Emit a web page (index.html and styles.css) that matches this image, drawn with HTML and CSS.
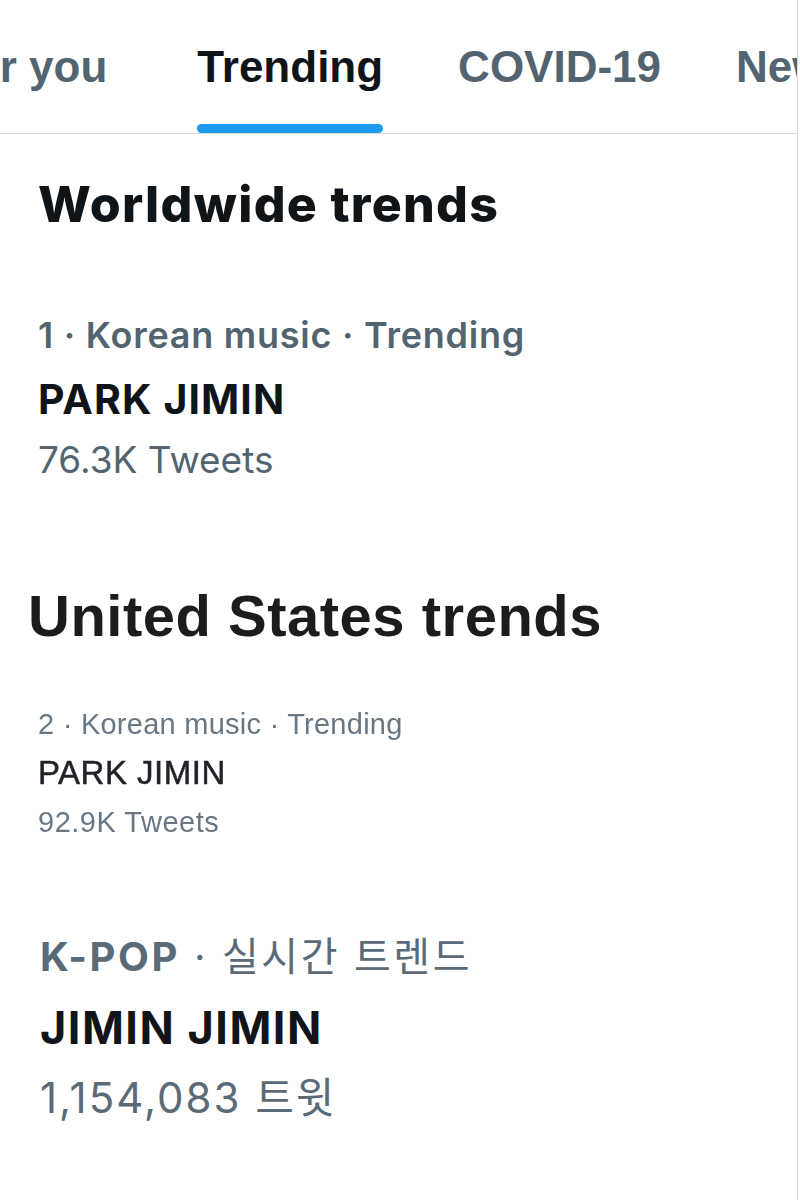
FILE: index.html
```html
<!DOCTYPE html>
<html lang="en">
<head>
<meta charset="utf-8">
<title>Trends</title>
<link rel="stylesheet" href="styles.css">
</head>
<body>
<div class="page">
  <nav class="tabs">
    <div class="tab tab-first"><span class="tab-label">For you</span></div>
    <div class="tab tab-active"><span class="tab-label">Trending</span><span class="tab-indicator"></span></div>
    <div class="tab"><span class="tab-label">COVID-19</span></div>
    <div class="tab"><span class="tab-label">News</span></div>
  </nav>

  <section class="ww">
    <h2 class="ww-heading">Worldwide trends</h2>
    <div class="ww-meta">1 · Korean music · Trending</div>
    <div class="ww-title">PARK JIMIN</div>
    <div class="ww-count">76.3K Tweets</div>
  </section>

  <section class="us">
    <h2 class="us-heading">United States trends</h2>
    <div class="us-meta">2 · Korean music · Trending</div>
    <div class="us-title">PARK JIMIN</div>
    <div class="us-count">92.9K Tweets</div>
  </section>

  <section class="kr">
    <div class="kr-meta"><b class="kr-cat">K-POP</b> · 실시간 트렌드</div>
    <div class="kr-title">JIMIN JIMIN</div>
    <div class="kr-count">1,154,083 트윗</div>
  </section>
</div>
</body>
</html>
```

FILE: styles.css
```css
html, body {
  margin: 0;
  padding: 0;
  background: #ffffff;
}

.page {
  width: 797px;
  height: 1200px;
  border-right: 1px solid #d6d9dc;
  overflow: hidden;
  font-family: "Liberation Sans", Arial, sans-serif;
}

/* Tabs */
.tabs {
  display: flex;
  gap: 75px;
  height: 133px;
  border-bottom: 1px solid #d3dadf;
  white-space: nowrap;
}

.tab {
  display: flex;
  flex-direction: column;
  padding-top: 45px;
  flex: none;
}

.tab-first {
  margin-left: -54px;
  margin-right: 15px;
}

.tab-label {
  font-family: "Liberation Sans", Arial, sans-serif;
  font-weight: 700;
  font-size: 44px;
  line-height: 44px;
  color: #536471;
}

.tab-active .tab-label {
  color: #0f1419;
}

.tab-indicator {
  display: block;
  height: 9px;
  margin-top: 35px;
  border-radius: 5px;
  background: #1d9bf0;
}

/* Worldwide */
.ww {
  padding-left: 38px;
  font-family: "Inter", "Liberation Sans", sans-serif;
}

.ww-heading {
  margin: 40px 0 0;
  font-size: 50px;
  line-height: 60px;
  font-weight: 800;
  letter-spacing: 1.3px;
  color: #0f1419;
}

.ww-meta {
  margin-top: 79px;
  font-size: 36px;
  line-height: 44px;
  font-weight: 600;
  letter-spacing: 0.75px;
  color: #536471;
}

.ww-title {
  margin-top: 17px;
  font-size: 41px;
  line-height: 50px;
  font-weight: 700;
  letter-spacing: 1.1px;
  color: #0f1419;
}

.ww-count {
  margin-top: 14px;
  font-size: 37px;
  line-height: 44px;
  font-weight: 400;
  color: #536471;
}

/* United States */
.us {
  padding-left: 38px;
  font-family: "Liberation Sans", Arial, sans-serif;
  filter: blur(0.5px);
}

.us-heading {
  margin: 101px 0 0 -10px;
  font-size: 58px;
  line-height: 66px;
  font-weight: 700;
  letter-spacing: 0.5px;
  color: #1c1c1c;
}

.us-meta {
  margin-top: 57px;
  font-size: 29px;
  line-height: 36px;
  letter-spacing: 0.25px;
  color: #687784;
}

.us-title {
  margin-top: 11px;
  font-size: 33px;
  line-height: 40px;
  letter-spacing: 0.5px;
  color: #1f2328;
  -webkit-text-stroke: 0.5px #1f2328;
}

.us-count {
  margin-top: 11px;
  font-size: 29px;
  line-height: 36px;
  letter-spacing: 0.5px;
  color: #687784;
}

/* Korean */
.kr {
  padding-left: 40px;
  font-family: "Inter", "Liberation Sans", "Noto Sans CJK KR", sans-serif;
}

.kr-meta {
  margin-top: 94px;
  font-size: 40px;
  line-height: 46px;
  letter-spacing: 2.6px;
  color: #5b6a77;
}

.kr-cat {
  font-weight: 700;
}

.kr-title {
  margin-top: 21px;
  font-size: 45px;
  line-height: 54px;
  font-weight: 700;
  letter-spacing: 1.5px;
  color: #111418;
}

.kr-count {
  margin-top: 18px;
  font-size: 42px;
  line-height: 50px;
  letter-spacing: 2px;
  color: #5b6a77;
}
```
